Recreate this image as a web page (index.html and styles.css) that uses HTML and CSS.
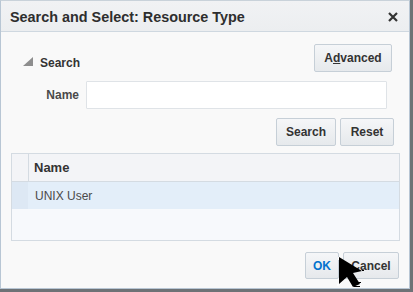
FILE: index.html
```html
<!DOCTYPE html>
<html>
<head>
<meta charset="utf-8">
<link rel="stylesheet" href="styles.css">
</head>
<body>
<div class="dialog">
  <div class="header">
    <span class="title">Search and Select: Resource Type</span>
    <svg class="close" width="10" height="10" viewBox="0 0 10 10"><path d="M1 1 L9 9 M9 1 L1 9" stroke="#333" stroke-width="2.2" stroke-linecap="butt"/></svg>
  </div>
  <div class="body">
    <div class="row-top">
      <div class="toggle">
        <svg width="10" height="9" viewBox="0 0 10 9"><polygon points="0,9 10,0 10,9" fill="#8e8e8e"/></svg>
        <span class="toggle-label">Search</span>
      </div>
      <button class="btn btn-adv">A<u>d</u>vanced</button>
    </div>
    <div class="row-field">
      <label class="field-label">Name</label>
      <div class="input"></div>
    </div>
    <div class="row-actions">
      <button class="btn btn-search">Search</button>
      <button class="btn btn-reset">Reset</button>
    </div>
    <div class="table">
      <div class="tr th">
        <div class="cell-sel"></div>
        <div class="cell">Name</div>
      </div>
      <div class="tr td">
        <div class="cell-sel"></div>
        <div class="cell">UNIX User</div>
      </div>
      <div class="empty"></div>
    </div>
    <div class="footer">
      <button class="btn btn-ok">OK</button>
      <button class="btn btn-cancel">Cancel</button>
    </div>
  </div>
</div>
<svg class="cursor" width="30" height="34" viewBox="0 0 30 34">
  <polygon points="2,1 25,15 16,17 23,28 16,31 10,21 2,28" fill="#000"/>
  <rect x="1" y="1" width="1" height="3" fill="#fff"/>
  <rect x="0" y="28" width="2" height="2" fill="#fff"/>
  <rect x="17" y="30" width="6" height="1" fill="#000"/>
  <rect x="20" y="26" width="4" height="1" fill="#000"/>
  <rect x="25" y="14" width="2" height="1" fill="#000"/>
</svg>
</body>
</html>
```
FILE: styles.css
```css
html, body {
  margin: 0;
  padding: 0;
}
body {
  width: 413px;
  height: 292px;
  background: #6e7276;
  font-family: "Liberation Sans", Arial, sans-serif;
  color: #333;
  position: relative;
  overflow: hidden;
}
.dialog {
  box-sizing: border-box;
  width: 410px;
  height: 289px;
  border: 1px solid #b8c6d4;
  border-top-color: #c9d2da;
  background: #f9f9f9;
  display: flex;
  flex-direction: column;
}
.header {
  height: 30px;
  border-bottom: 1px solid #cfd8e0;
  background: linear-gradient(#f1f2f4, #eceef0);
  display: flex;
  align-items: center;
  padding: 0 11px 0 9px;
}
.title {
  flex: 1;
  font-weight: bold;
  font-size: 14.4px;
  color: #2e2e2e;
  padding-top: 1px;
}
.close {
  margin-top: 1px;
}
.body {
  flex: 1;
  padding: 12px 9px 0 10px;
  display: flex;
  flex-direction: column;
}
.btn {
  box-sizing: border-box;
  border: 1px solid #c6cfd7;
  border-radius: 2px;
  background: linear-gradient(#f5f6f8, #e6e9ec);
  font-family: "Liberation Sans", Arial, sans-serif;
  font-weight: bold;
  font-size: 12px;
  color: #333;
  padding: 0;
  margin: 0;
  height: 28px;
}
.btn u {
  text-decoration: underline;
}
.row-top {
  display: flex;
  justify-content: space-between;
  align-items: flex-start;
}
.toggle {
  display: flex;
  align-items: center;
  margin-left: 12px;
  margin-top: 12px;
  gap: 7px;
}
.toggle svg {
  margin-top: -4px;
}
.toggle-label {
  font-weight: bold;
  font-size: 12px;
  color: #333;
}
.btn-adv {
  width: 78px;
  margin-right: 8px;
}
.row-field {
  display: flex;
  align-items: center;
  margin-top: 9px;
}
.field-label {
  width: 68px;
  text-align: right;
  font-weight: bold;
  font-size: 12px;
  color: #4a4a4a;
}
.input {
  box-sizing: border-box;
  margin-left: 7px;
  width: 301px;
  height: 28px;
  background: #fff;
  border: 1px solid #dfe3e7;
  border-radius: 1px;
}
.row-actions {
  display: flex;
  justify-content: flex-end;
  gap: 4px;
  margin-top: 9px;
  margin-right: 6px;
}
.btn-search {
  width: 60px;
}
.btn-reset {
  width: 54px;
}
.table {
  box-sizing: border-box;
  margin-top: 7px;
  height: 88px;
  border: 1px solid #d4dbe2;
  background: #f7f9fc;
  display: flex;
  flex-direction: column;
}
.tr {
  display: flex;
  height: 27px;
}
.th {
  background: #f3f4f7;
  border-bottom: 1px solid #d4dbe2;
}
.td {
  background: #e3eef9;
}
.cell-sel {
  width: 16px;
  border-right: 1px solid #d4dbe2;
}
.td .cell-sel {
  background: #dde8f4;
  border-right-color: #e3eef9;
}
.cell {
  display: flex;
  align-items: center;
  padding-left: 5px;
}
.th .cell {
  font-weight: bold;
  font-size: 13px;
  color: #333;
}
.td .cell {
  font-size: 12px;
  color: #4a4a4a;
  padding-left: 6px;
}
.empty {
  flex: 1;
}
.footer {
  display: flex;
  justify-content: flex-end;
  gap: 4px;
  margin-top: 11px;
  margin-right: 1px;
}
.btn-ok {
  width: 34px;
  height: 27px;
  color: #0572ce;
}
.btn-cancel {
  width: 56px;
  height: 27px;
}
.cursor {
  position: absolute;
  left: 337px;
  top: 256px;
}
```
